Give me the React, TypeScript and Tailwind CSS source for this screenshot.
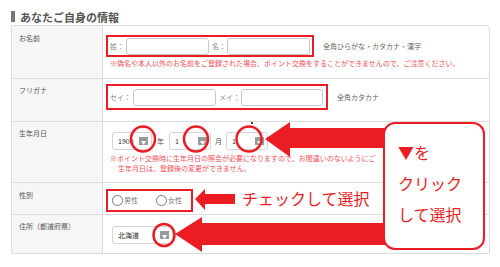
const font = "font-['Noto_Sans_CJK_JP','Noto_Sans',sans-serif]";

function Field({ width }: { width: string }) {
  return <div className={`${width} h-[17px] rounded-[3px] border border-[#c8c8c8] bg-white`} />;
}

function Select({ value, width }: { value: string; width: string }) {
  return (
    <div
      className={`${width} h-[18px] flex items-center rounded-[3px] border border-[#d4d4d4] bg-white pl-[5px] pr-[3px] text-[7px] text-[#333]`}
    >
      <span>{value}</span>
      <span className="ml-auto flex h-[8px] w-[9px] items-center justify-center bg-[#9a9a9a] text-[5px] leading-none text-white">
        ▼
      </span>
    </div>
  );
}

function Radio({ label }: { label: string }) {
  return (
    <div className="flex items-center gap-[1px]">
      <span className="h-[11px] w-[11px] rounded-full border border-[#777] bg-white" />
      <span className="text-[7px] text-[#777]">{label}</span>
    </div>
  );
}

const rows = [
  { label: "お名前", height: "h-[53px]", pt: "pt-[7px]" },
  { label: "フリガナ", height: "h-[43px]", pt: "pt-[6px]" },
  { label: "生年月日", height: "h-[61px]", pt: "pt-[6px]" },
  { label: "性別", height: "h-[32px]", pt: "pt-[7px]" },
  { label: "住所（都道府県）", height: "h-[38px]", pt: "pt-[6px]" },
];

export default function App() {
  const cells = [
    // お名前
    <div className="pt-[9px] pl-[3px]">
      <div className="flex items-center">
        <div className="flex h-[22px] items-center border-2 border-[#ec1c24] pl-[2px] pr-[2px] text-[7px] text-[#888]">
          <span className="w-[16px]">姓：</span>
          <Field width="w-[83px]" />
          <span className="w-[18px] pl-[3px]">名：</span>
          <Field width="w-[83px]" />
        </div>
        <span className="ml-[9px] text-[7px] text-[#666]">全角ひらがな・カタカナ・漢字</span>
      </div>
      <p className="mt-[1px] pl-[4px] text-[7px] leading-[10px] whitespace-nowrap text-[#f2505a]">
        ※偽名や本人以外のお名前をご登録された場合、ポイント交換をすることができませんので、ご注意ください。
      </p>
    </div>,
    // フリガナ
    <div className="pt-[5px] pl-[3px]">
      <div className="flex items-center">
        <div className="flex h-[26px] items-center border-2 border-[#ec1c24] pl-[2px] pr-[3px] text-[7px] text-[#888]">
          <span className="w-[23px]">セイ：</span>
          <Field width="w-[83px]" />
          <span className="w-[25px] pl-[3px]">メイ：</span>
          <Field width="w-[82px]" />
        </div>
        <span className="ml-[9px] text-[7px] text-[#666]">全角カタカナ</span>
      </div>
    </div>,
    // 生年月日
    <div className="pt-[10px] pl-[7px]">
      <div className="flex items-center pl-[2px] text-[7px] text-[#555]">
        <Select value="1900" width="w-[40px]" />
        <span className="mx-[5px]">年</span>
        <Select value="1" width="w-[42px]" />
        <span className="mx-[4px]">月</span>
        <Select value="1" width="w-[42px]" />
        <span className="ml-[4px]">日</span>
      </div>
      <p className="mt-[3px] text-[7px] leading-[10px] whitespace-nowrap text-[#f2505a]">
        ※ポイント交換時に生年月日の照会が必要になりますので、お間違いのないようにご
      </p>
      <p className="pl-[8px] text-[7px] leading-[10px] whitespace-nowrap text-[#f2505a]">
        生年月日は、登録後の変更ができません。
      </p>
    </div>,
    // 性別
    <div className="pt-[6px] pl-[3px]">
      <div className="flex h-[23px] w-[87px] items-center gap-[18px] border-2 border-[#ec1c24] pl-[4px]">
        <Radio label="男性" />
        <Radio label="女性" />
      </div>
    </div>,
    // 住所
    <div className="pt-[11px] pl-[9px]">
      <Select value="北海道" width="w-[61px]" />
    </div>,
  ];

  return (
    <div className={`relative h-[267px] w-[500px] overflow-hidden bg-white ${font}`}>
      <div className="flex h-[25px] items-start gap-[5px] pt-[11px] pl-[11px]">
        <span className="h-[11px] w-[4px] bg-[#777]" />
        <h2 className="text-[11px] font-bold leading-[12px] text-[#555]">あなたご自身の情報</h2>
      </div>

      <div className="ml-[11px] w-[479px] rounded-tr-[4px] border border-[#dcdcdc]">
        {rows.map((row, i) => (
          <div
            key={row.label}
            className={`grid grid-cols-[91px_1fr] ${row.height} ${
              i < rows.length - 1 ? "border-b border-[#dcdcdc]" : ""
            }`}
          >
            <div className={`border-r border-[#dcdcdc] bg-[#f6f6f6] pl-[7px] ${row.pt} text-[7px] leading-[10px] text-[#555]`}>
              {row.label}
            </div>
            {cells[i]}
          </div>
        ))}
      </div>

      {/* 赤い丸と矢印 */}
      <svg className="absolute inset-0" width={500} height={267} viewBox="0 0 500 267">
        <g fill="none" stroke="#ec1c24" strokeWidth={2.5}>
          <ellipse cx={143} cy={139} rx={12} ry={12.5} />
          <ellipse cx={196} cy={139} rx={12} ry={12.5} />
          <ellipse cx={249} cy={139} rx={12.5} ry={12.5} />
          <ellipse cx={164} cy={235} rx={10.5} ry={11} />
        </g>
        <g fill="#ec1c24">
          <polygon points="265,139 290,122 290,128 390,128 390,148 290,148 290,157" />
          <polygon points="195,199 205,189 205,194 235,194 235,204 205,204 205,210" />
          <polygon points="175,234 202,217 202,223 390,223 390,245 202,245 202,252" />
        </g>
        <rect x={251} y={122} width={2} height={2} fill="#444" />
      </svg>

      <span className="absolute left-[242px] top-[188px] text-[16px] leading-[20px] text-[#ec1c24]">
        チェックして選択
      </span>

      <div className="absolute left-[383px] top-[122px] h-[128px] w-[102px] rounded-[12px] border-2 border-[#ec1c24] bg-white pt-[13px] pl-[13px] text-[16px] leading-[31px] text-[#ec1c24]">
        <p>▼を</p>
        <p>クリック</p>
        <p>して選択</p>
      </div>
    </div>
  );
}
